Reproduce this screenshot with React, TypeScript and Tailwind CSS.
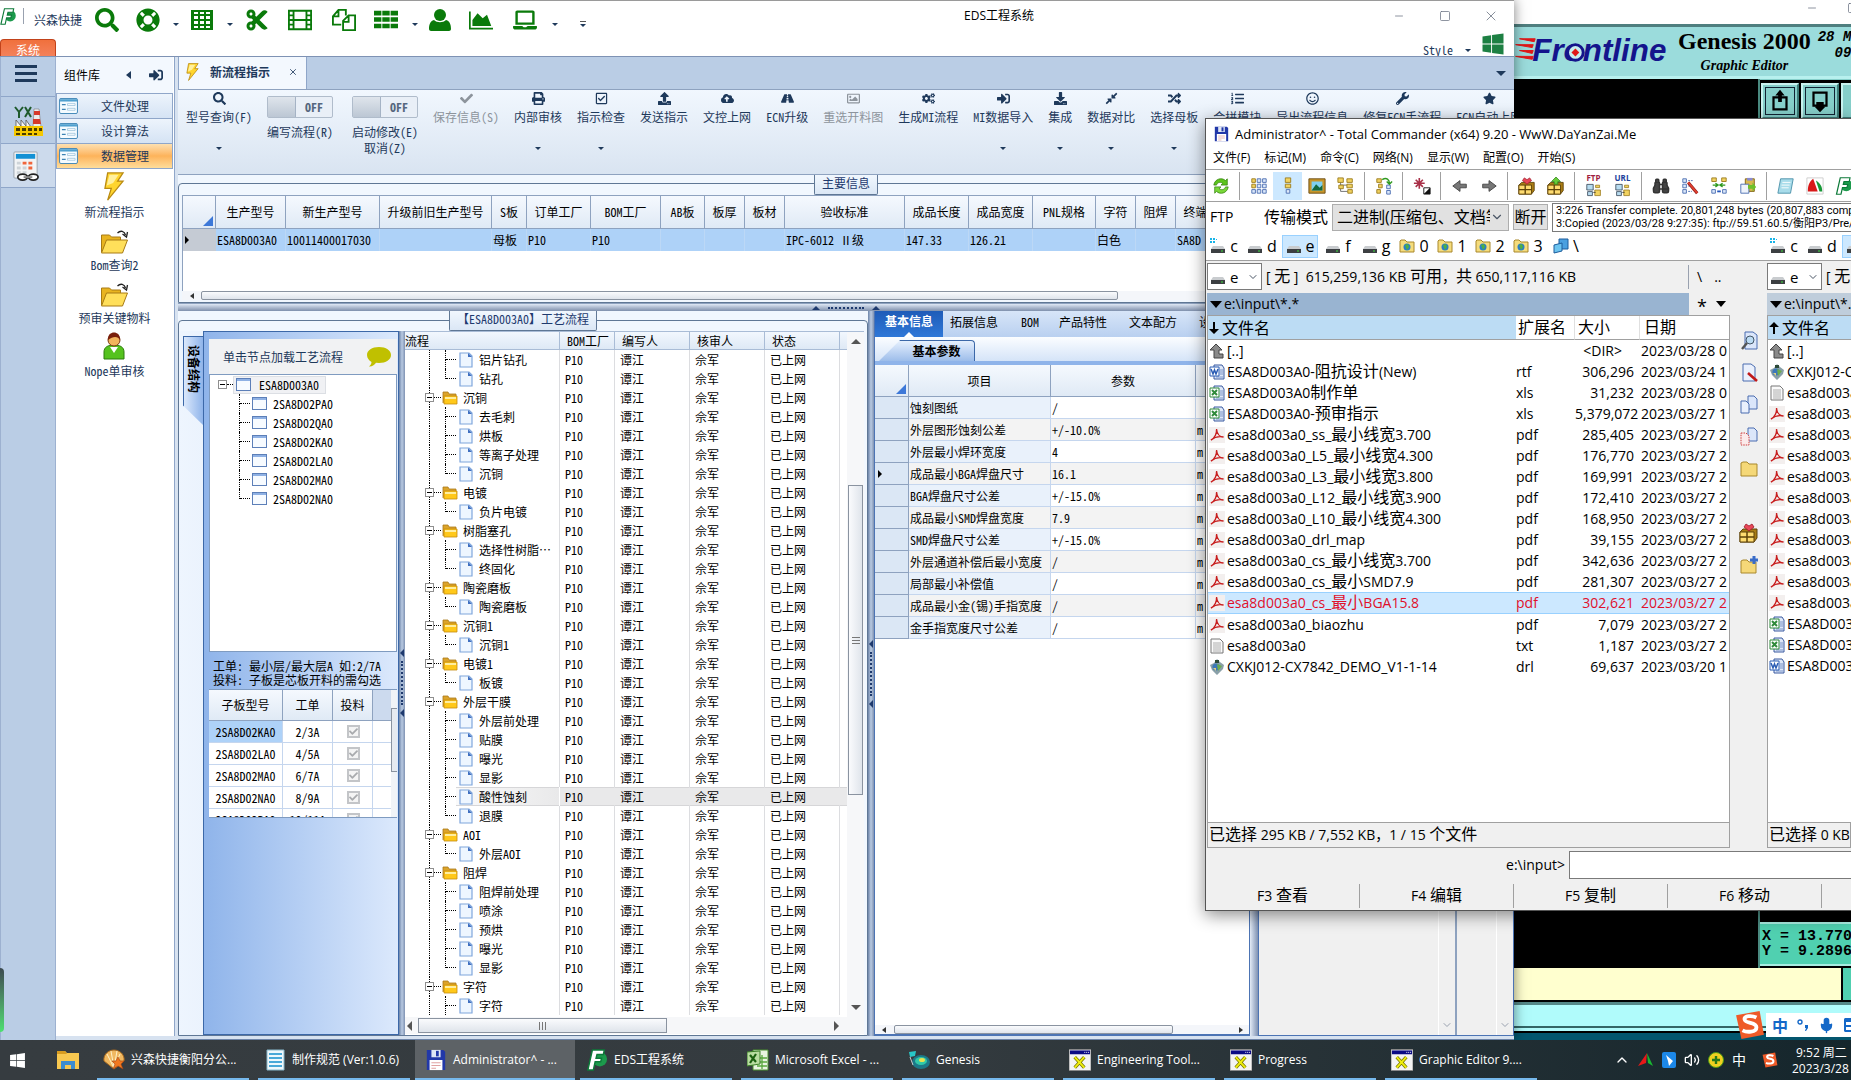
import { useState } from "react";
import type { ComponentType, ReactNode } from "react";
import {
  FaCheck,
  FaCloudUploadAlt,
  FaCogs,
  FaCompressAlt,
  FaCut,
  FaDownload,
  FaLaptop,
  FaLifeRing,
  FaListOl,
  FaPrint,
  FaRandom,
  FaRegCheckSquare,
  FaRegImage,
  FaRegSmile,
  FaRoad,
  FaSearch,
  FaSignInAlt,
  FaStar,
  FaTable,
  FaUpload,
  FaWindows,
  FaWrench,
} from "react-icons/fa";
import {
  Binoculars,
  ChevronDown,
  ChevronUp,
  Mic,
  Minus,
  Square,
  Volume2,
  X,
} from "lucide-react";

type Icon = ComponentType<{ className?: string }>;

/* ---------- title bar glyphs ---------- */

function GridGlyph({ className }: { className?: string }) {
  return (
    <svg viewBox="0 0 24 24" className={className} fill="currentColor" fillRule="evenodd">
      <path d="M1 2h22v20H1zM4 8v3h4V8zM10 8v3h4V8zM16 8v3h4V8zM4 13v3h4v-3zM10 13v3h4v-3zM16 13v3h4v-3zM4 18v2h4v-2zM10 18v2h4v-2zM16 18v2h4v-2zM4 4v2h4V4zM10 4v2h4V4zM16 4v2h4V4z" />
    </svg>
  );
}

function FilmGlyph({ className }: { className?: string }) {
  return (
    <svg viewBox="0 0 26 24" className={className} fill="currentColor" fillRule="evenodd">
      <path d="M0 1h26v22H0zM2 3v3h3V3zM2 8v3h3V8zM2 13v3h3v-3zM2 18v3h3v-3zM21 3v3h3V3zM21 8v3h3V8zM21 13v3h3v-3zM21 18v3h3v-3zM7 3v8h12V3zM7 13v8h12v-8z" />
    </svg>
  );
}

function CopyGlyph({ className }: { className?: string }) {
  return (
    <svg viewBox="0 0 26 24" className={className} fill="none" stroke="currentColor" strokeWidth="2">
      <path d="M10 17H1V8l6-7h8v6M7 1v7H1M12 23V13l6-6h7v16zM18 7v7h-6" />
    </svg>
  );
}

function RowsGlyph({ className }: { className?: string }) {
  return (
    <svg viewBox="0 0 26 24" className={className} fill="currentColor">
      <path d="M0 2h8v5H0zM9 2h8v5H9zM18 2h8v5h-8zM0 9h8v5H0zM9 9h8v5H9zM18 9h8v5h-8zM0 16h8v5H0zM9 16h8v5H9zM18 16h8v5h-8z" />
    </svg>
  );
}

function UserGlyph({ className }: { className?: string }) {
  return (
    <svg viewBox="0 0 22 24" className={className} fill="currentColor">
      <circle cx="11" cy="7" r="6" />
      <path d="M5 12c3 3 9 3 12 0 4 1 5 5 5 9 0 1-1 2-2 2H2c-1 0-2-1-2-2 0-4 1-8 5-9z" />
    </svg>
  );
}

function AreaGlyph({ className }: { className?: string }) {
  return (
    <svg viewBox="0 0 28 24" className={className} fill="currentColor">
      <path d="M0 2h2v19h26v2H0zM4 19v-7l6-8 6 6 5-4 5 13z" />
    </svg>
  );
}

/* ---------- data ---------- */

const QUICK_TOOLS: { name: string; icon: Icon; caret?: boolean; cls: string }[] = [
  { name: "查询", icon: FaSearch, cls: "w-6 ml-[13px]" },
  { name: "帮助", icon: FaLifeRing, caret: true, cls: "w-6 ml-[17px]" },
  { name: "表格", icon: GridGlyph, caret: true, cls: "w-6 ml-[11px]" },
  { name: "剪切", icon: FaCut, cls: "w-6 ml-3" },
  { name: "影片", icon: FilmGlyph, cls: "w-[26px] ml-[18px]" },
  { name: "复制", icon: CopyGlyph, cls: "w-[26px] ml-[18px]" },
  { name: "列表", icon: RowsGlyph, caret: true, cls: "w-[26px] ml-4" },
  { name: "用户", icon: UserGlyph, cls: "w-[22px] ml-[11px]" },
  { name: "图表", icon: AreaGlyph, cls: "w-7 ml-4" },
  { name: "电脑", icon: FaLaptop, caret: true, cls: "w-7 ml-4" },
];

type RibbonItem = { label: string; icon?: Icon; caret?: boolean; disabled?: boolean; extra?: string };

const RIBBON: RibbonItem[] = [
  { label: "型号查询(F)", icon: FaSearch, caret: true },
  { label: "编写流程(R)" },
  { label: "启动修改(E)", extra: "取消(Z)" },
  { label: "保存信息(S)", icon: FaCheck, disabled: true },
  { label: "内部审核", icon: FaPrint, caret: true },
  { label: "指示检查", icon: FaRegCheckSquare, caret: true },
  { label: "发送指示", icon: FaUpload },
  { label: "文控上网", icon: FaCloudUploadAlt },
  { label: "ECN升级", icon: FaRoad },
  { label: "重选开料图", icon: FaRegImage, disabled: true },
  { label: "生成MI流程", icon: FaCogs },
  { label: "MI数据导入", icon: FaSignInAlt, caret: true },
  { label: "集成", icon: FaDownload, caret: true },
  { label: "数据对比", icon: FaCompressAlt, caret: true },
  { label: "选择母板", icon: FaRandom, caret: true },
  { label: "合拼模块", icon: FaListOl },
  { label: "导出流程信息", icon: FaRegSmile },
  { label: "修复ECN手流程", icon: FaWrench },
  { label: "ECN自动上网", icon: FaStar },
];

const MAIN_COLS = [
  { title: "生产型号", value: "ESA8D003A0", w: "w-[70px]" },
  { title: "新生产型号", value: "10011400017030", w: "w-[94px]" },
  { title: "升级前旧生产型号", value: "", w: "w-[112px]" },
  { title: "S板", value: "母板", w: "w-[35px]" },
  { title: "订单工厂", value: "P10", w: "w-[64px]" },
  { title: "BOM工厂", value: "P10", w: "w-[70px]" },
  { title: "AB板", value: "", w: "w-[44px]" },
  { title: "板厚", value: "", w: "w-10" },
  { title: "板材", value: "", w: "w-10" },
  { title: "验收标准", value: "IPC-6012 Ⅱ级", w: "w-[120px]" },
  { title: "成品长度", value: "147.33", w: "w-16" },
  { title: "成品宽度", value: "126.21", w: "w-16" },
  { title: "PNL规格", value: "", w: "w-[63px]" },
  { title: "字符", value: "白色", w: "w-10" },
  { title: "阻焊", value: "", w: "w-10" },
  { title: "终端", value: "SA8D", w: "w-10" },
];

const BOARDS = ["2SA8D02PA0", "2SA8D02QA0", "2SA8D02KA0", "2SA8D02LA0", "2SA8D02MA0", "2SA8D02NA0"];

const ORDERS = [
  ["2SA8D02KA0", "2/3A"],
  ["2SA8D02LA0", "4/5A"],
  ["2SA8D02MA0", "6/7A"],
  ["2SA8D02NA0", "8/9A"],
  ["2SA8D02PA0", "10/11A"],
];

const FLOW: { name?: string; steps: string[]; open?: boolean }[] = [
  { steps: ["铝片钻孔", "钻孔"] },
  { name: "沉铜", steps: ["去毛刺", "烘板", "等离子处理", "沉铜"] },
  { name: "电镀", steps: ["负片电镀"] },
  { name: "树脂塞孔", steps: ["选择性树脂…", "终固化"] },
  { name: "陶瓷磨板", steps: ["陶瓷磨板"] },
  { name: "沉铜1", steps: ["沉铜1"] },
  { name: "电镀1", steps: ["板镀"] },
  { name: "外层干膜", steps: ["外层前处理", "贴膜", "曝光", "显影", "酸性蚀刻", "退膜"] },
  { name: "AOI", steps: ["外层AOI"] },
  { name: "阻焊", steps: ["阻焊前处理", "喷涂", "预烘", "曝光", "显影"] },
  { name: "字符", steps: ["字符"], open: true },
];

const PARAMS = [
  ["蚀刻图纸", "/", ""],
  ["外层图形蚀刻公差", "+/-10.0%", "mil"],
  ["外层最小焊环宽度", "4", "mil"],
  ["成品最小BGA焊盘尺寸", "16.1", "mil"],
  ["BGA焊盘尺寸公差", "+/-15.0%", "mil"],
  ["成品最小SMD焊盘宽度", "7.9", "mil"],
  ["SMD焊盘尺寸公差", "+/-15.0%", "mil"],
  ["外层通道补偿后最小宽度", "/", "mil"],
  ["局部最小补偿值", "/", "mil"],
  ["成品最小金(锡)手指宽度", "/", "mil"],
  ["金手指宽度尺寸公差", "/", "mil"],
];

const FILES = [
  ["up", "[..]", "", "<DIR>", "2023/03/28 0"],
  ["doc", "ESA8D003A0-阻抗设计(New)", "rtf", "306,296", "2023/03/24 1"],
  ["xls", "ESA8D003A0制作单", "xls", "31,232", "2023/03/28 0"],
  ["xls", "ESA8D003A0-预审指示", "xls", "5,379,072", "2023/03/27 1"],
  ["pdf", "esa8d003a0_ss_最小线宽3.700", "pdf", "285,405", "2023/03/27 2"],
  ["pdf", "esa8d003a0_L5_最小线宽4.300", "pdf", "176,770", "2023/03/27 2"],
  ["pdf", "esa8d003a0_L3_最小线宽3.800", "pdf", "169,991", "2023/03/27 2"],
  ["pdf", "esa8d003a0_L12_最小线宽3.900", "pdf", "172,410", "2023/03/27 2"],
  ["pdf", "esa8d003a0_L10_最小线宽4.300", "pdf", "168,950", "2023/03/27 2"],
  ["pdf", "esa8d003a0_drl_map", "pdf", "39,155", "2023/03/27 2"],
  ["pdf", "esa8d003a0_cs_最小线宽3.700", "pdf", "342,636", "2023/03/27 2"],
  ["pdf", "esa8d003a0_cs_最小SMD7.9", "pdf", "281,307", "2023/03/27 2"],
  ["pdf", "esa8d003a0_cs_最小BGA15.8", "pdf", "302,621", "2023/03/27 2"],
  ["pdf", "esa8d003a0_biaozhu", "pdf", "7,079", "2023/03/27 2"],
  ["txt", "esa8d003a0", "txt", "1,187", "2023/03/27 2"],
  ["drl", "CXKJ012-CX7842_DEMO_V1-1-14", "drl", "69,637", "2023/03/20 1"],
];

const RIGHT_FILES = [
  ["up", "[..]"],
  ["drl", "CXKJ012-CX7842"],
  ["txt", "esa8d003a0"],
  ...Array.from({ length: 10 }, () => ["pdf", "esa8d003a0_cs"]),
  ["xls", "ESA8D003A0"],
  ["xls", "ESA8D003A0"],
  ["doc", "ESA8D003A0"],
];

/* ---------- small drawings ---------- */

function Bolt({ className }: { className?: string }) {
  return (
    <svg viewBox="0 0 24 32" className={className}>
      <path d="M5 1h17l-6 9h6L5 31l4-13H2z" fill="#ffd52e" stroke="#b98a12" strokeWidth="1.4" />
      <path d="M7 3h10l-6 9-7 3z" fill="#fff0a0" />
    </svg>
  );
}

function FolderArrow({ className }: { className?: string }) {
  return (
    <svg viewBox="0 0 28 24" className={className}>
      <path d="M1 22V5h8l2 2h9v4" fill="#e8b420" stroke="#a87b14" />
      <path d="M1 23l5-13h21l-5 13z" fill="#ffdf5a" stroke="#a87b14" />
      <path d="M17 3c3-3 7-2 8 2M22 4l4 3 1-5" fill="none" stroke="#222" strokeWidth="1.3" />
    </svg>
  );
}

function Person({ className }: { className?: string }) {
  return (
    <svg viewBox="0 0 22 28" className={className}>
      <path d="M1 27v-7c0-5 4-7 10-7s10 2 10 7v7z" fill="#55c21e" stroke="#2d7c0c" />
      <path d="M7 15l4 6 4-6z" fill="#fff" />
      <circle cx="11" cy="8" r="6" fill="#f2b45c" stroke="#7a3a12" />
      <path d="M5 8c-1-10 13-10 12 0-2-4-7-4-12 0z" fill="#7a1f0c" />
    </svg>
  );
}

function FormIcon({ className }: { className?: string }) {
  return (
    <svg viewBox="0 0 20 17" className={className}>
      <rect x="0.5" y="0.5" width="19" height="16" rx="1.5" fill="#f4fbff" stroke="#3c83b4" />
      <path d="M1 2.5h18" stroke="#4fa0cf" strokeWidth="2.5" />
      <path d="M3 7h4M3 12h4" stroke="#3c83b4" strokeWidth="1.4" />
      <path d="M9 6h8v2H9zM9 11h8v2H9z" fill="#fff" stroke="#8bb9d6" strokeWidth="0.7" />
    </svg>
  );
}

function Factory({ className }: { className?: string }) {
  return (
    <svg viewBox="0 0 31 31" className={className}>
      <path d="M2 2l4 5v6M10 2L6 7M12 2l6 10M18 2l-6 10" stroke="#1f5a2c" strokeWidth="2" fill="none" />
      <path d="M21 4h5l2 18h-8z" fill="#eee" stroke="#777" strokeWidth="0.6" />
      <path d="M21 6h6v4h-6zM20 14h7l1 5h-8z" fill="#d63a2c" />
      <path d="M3 22v-7l5 6v-6l5 6v-6l5 7z" fill="#f3f3f3" stroke="#555" strokeWidth="0.8" />
      <path d="M1 21h29v10H1z" fill="#f5c800" />
      <path d="M3 23h4v3H3zM9 23h4v3H9zM15 23h4v3h-4zM21 23h3v3h-3zM26 23h3v3h-3zM3 28h4v2H3zM9 28h4v2H9zM15 28h4v2h-4zM21 28h3v2h-3z" fill="#4a3c00" />
    </svg>
  );
}

function Calc({ className }: { className?: string }) {
  return (
    <svg viewBox="0 0 30 31" className={className}>
      <rect x="2" y="1" width="24" height="27" rx="1" fill="#f2f4f6" stroke="#9aa4ad" />
      <path d="M4 3h20v5H4z" fill="#1491d4" />
      <path d="M5 11h4v3H5zM5 16h4v3H5zM5 21h4v3H5zM11 16h4v3h-4zM11 21h4v3h-4z" fill="#cdd3d8" />
      <path d="M11 11h4v3h-4zM17 11h4v3h-4zM17 16h4v3h-4z" fill="#f0663c" />
      <ellipse cx="11" cy="27" rx="5" ry="3" fill="#fff" stroke="#222" strokeWidth="1.8" />
      <ellipse cx="22" cy="27" rx="5" ry="3" fill="#fff" stroke="#222" strokeWidth="1.8" />
      <path d="M12 27h9" stroke="#888" strokeWidth="2" />
    </svg>
  );
}

function FLogo({ className }: { className?: string }) {
  return (
    <svg viewBox="0 0 22 24" className={className}>
      <circle cx="14" cy="11" r="8" fill="#1c9a4c" />
      <path d="M6 1h13l-1 5H11l-1 4h6l-1 4H9l-2 9H1z" fill="#fff" stroke="#0c7a38" strokeWidth="1.6" />
    </svg>
  );
}

function YellowFolder({ className }: { className?: string }) {
  return (
    <svg viewBox="0 0 16 14" className={className}>
      <path d="M1 12V1h5l1 2h7v2" fill="#dca42a" stroke="#a9781a" strokeWidth="0.8" />
      <path d="M2 13V5h13v8z" fill="#ffc81a" stroke="#c48a10" strokeWidth="0.8" />
      <path d="M3 6h11v2H3z" fill="#ffeea0" />
    </svg>
  );
}

function Page({ className }: { className?: string }) {
  return (
    <svg viewBox="0 0 14 16" className={className}>
      <path d="M1 1h9l3 3v11H1z" fill="#eef6ff" stroke="#7fa6dc" strokeWidth="1.2" />
      <path d="M9 1v4h4z" fill="#3f6fc0" />
    </svg>
  );
}

function WindowIcon({ className }: { className?: string }) {
  return (
    <svg viewBox="0 0 15 13" className={className}>
      <rect x="0.5" y="0.5" width="14" height="12" fill="#f7fbff" stroke="#5c7fb8" />
      <path d="M1 2h13" stroke="#8fb1e4" strokeWidth="2" />
    </svg>
  );
}

function Disk({ className }: { className?: string }) {
  return (
    <svg viewBox="0 0 22 24" className={className}>
      <path d="M1 1h18l2 2v20H1z" fill="#2238a8" />
      <path d="M6 1h10v8H6z" fill="#dfe6f5" />
      <path d="M11 2h3v6h-3z" fill="#2238a8" />
      <path d="M4 12h14v11H4z" fill="#fff" />
      <path d="M6 15h10M6 18h10M6 21h5" stroke="#d99" />
    </svg>
  );
}

function XWin({ className }: { className?: string }) {
  return (
    <svg viewBox="0 0 23 22" className={className}>
      <path d="M0 0h23v22H0z" fill="#f4f4f4" stroke="#888" />
      <path d="M1 1h21v4H1z" fill="#0a0a84" />
      <path d="M16 3h1M18 3h1M20 3h1" stroke="#fff" />
      <path d="M6 8l10 11M16 8L6 19" stroke="#777700" strokeWidth="3.6" />
      <path d="M6 8l10 11M16 8L6 19" stroke="#f0ee10" strokeWidth="2" />
    </svg>
  );
}

function Drive({ className, win }: { className?: string; win?: boolean }) {
  return (
    <svg viewBox="0 0 16 16" className={className}>
      {win && <path d="M0 0h2v2H0zM3 0h2v2H3zM0 3h2v2H0zM3 3h2v2H3zM6 1h1v1H6z" fill="#18b4e8" />}
      <path d="M3 8h10l2 3H1z" fill="#c9cccf" />
      <path d="M1 11h14v4H1z" fill="#3c3f42" />
      <path d="M11 13h2" stroke="#3de03d" strokeWidth="1.2" />
    </svg>
  );
}

function GlobeFolder() {
  return (
    <svg viewBox="0 0 16 16" className="size-4 shrink-0">
      <path d="M1 14V3l1-1h4l2 2h7v10z" fill="#f5dc7c" stroke="#a9882c" />
      <circle cx="8" cy="9" r="3.5" fill="#2b7fc4" />
      <path d="M6 7l3-1 1 3-2 3z" fill="#50b040" />
    </svg>
  );
}

function FileIcon({ kind }: { kind: string }) {
  const office = (color: string, mark: ReactNode) => (
    <>
      <path d="M5 1h8l2 3v11H5z" fill="#dfe8f8" stroke="#3a5aa0" />
      <path d="M11 6h3M11 8h3M11 10h3M7 13h7" stroke="#7a94c8" />
      <path d="M1 3h9v9H1z" fill="#fff" stroke={color} />
      {mark}
    </>
  );
  return (
    <svg viewBox="0 0 16 16" className="size-4 shrink-0">
      {kind === "up" && <path d="M7 1l6 6h-3v4h4v4H5V7H1z" fill="#8a8a8a" stroke="#444" />}
      {kind === "doc" && office("#2a5cb4", <path d="M2 5l2 5 1.5-4L7 10l2-5" fill="none" stroke="#2a5cb4" strokeWidth="1.5" />)}
      {kind === "xls" && office("#2f8a3a", <path d="M3 5l5 5M8 5l-5 5" stroke="#2f8a3a" strokeWidth="2" />)}
      {kind === "pdf" && (
        <>
          <path d="M0 0h16v16H0z" fill="#f3efee" />
          <path d="M2 13c4-2 6-7 5.500-11C8 7 11 10 14.500 10 10 9 5 10.500 2 13z" fill="none" stroke="#c81e1e" strokeWidth="1.400" />
        </>
      )}
      {kind === "txt" && (
        <>
          <path d="M2 1h9l3 3v11H2z" fill="#fafafa" stroke="#777" />
          <path d="M4 5h8M4 7h8M4 9h8M4 11h8M4 13h8" stroke="#999" strokeWidth="0.8" />
        </>
      )}
      {kind === "drl" && (
        <>
          <path d="M8 0l3 3 4 3-1 4-6 6-5-5-2-5 4-2z" fill="#8aa0a8" />
          <circle cx="7" cy="8" r="3.6" fill="#3d78b8" />
          <path d="M8 5l5 2-4 5z" fill="#6cae4c" />
          <path d="M6 1h4v3H6z" fill="#2c4a38" />
          <path d="M4 9h3v3z" fill="#e0d080" />
        </>
      )}
    </svg>
  );
}

/* icons of the file manager's bars, all on a 20px grid */
const BOX = (
  <>
    <path d="M1 9l3-3h14v9l-3 4H1z" fill="#a87c14" stroke="#5e4208" />
    <path d="M1 9h14v10H1z" fill="#ffdc70" stroke="#5e4208" />
    <path d="M8 9v10M1 14h14" stroke="#5e4208" strokeWidth="1.5" />
  </>
);

const BAR_DRAWINGS: Record<string, ReactNode> = {
  refresh: (
    <>
      <path d="M2 9c1-7 9-9 13-5l2-2v7h-7l2-2c-3-2-6-1-7 2z" fill="#5cc41c" stroke="#2f7d0a" strokeWidth="0.8" />
      <path d="M18 11c-1 7-9 9-13 5l-2 2v-7h7l-2 2c3 2 6 1 7-2z" fill="#7ad83a" stroke="#2f7d0a" strokeWidth="0.8" />
    </>
  ),
  brief: (
    <>
      <path d="M2 2h4v4H2zM2 8h4v4H2z" fill="#f1d260" stroke="#9b7a1c" />
      <path d="M8 2h4v4H8zM14 2h4v4h-4zM8 8h4v4H8zM14 8h4v4h-4zM2 14h4v4H2zM8 14h4v4H8zM14 14h4v4h-4z" fill="#dce8fa" stroke="#4a6cb0" />
    </>
  ),
  full: (
    <>
      <path d="M7 1h6v5H7zM7 8h6v4H7z" fill="#f1d260" stroke="#9b7a1c" />
      <path d="M8 14h4v4H8z" fill="#dce8fa" stroke="#4a6cb0" />
    </>
  ),
  thumbs: (
    <>
      <path d="M1 2h18v16H1z" fill="#c8962a" stroke="#6a4a10" />
      <path d="M4 5h12v10H4z" fill="#7fd0f0" />
      <path d="M4 15l5-7 4 4 3-3v6z" fill="#14683c" />
    </>
  ),
  tree: (
    <>
      <path d="M4 5v11h8M4 9h8" fill="none" stroke="#666" />
      <path d="M1 1h6v5H1zM11 2h6v4h-6zM11 8h6v4h-6zM2 9h5v4H2z" fill="#f1d260" stroke="#9b7a1c" />
      <path d="M12 14h5v4h-5z" fill="#f1d260" stroke="#9b7a1c" />
    </>
  ),
  branch: (
    <>
      <path d="M2 2h5v4H2zM4 8h4v4H4zM2 14h4v4H2z" fill="#f1d260" stroke="#9b7a1c" />
      <path d="M13 9h4v4h-4zM13 15h4v4h-4z" fill="#dce8fa" stroke="#4a6cb0" />
      <path d="M8 3c5-3 8 0 8 4M13 5l3 3 3-3" fill="none" stroke="#2f9a20" strokeWidth="1.6" />
    </>
  ),
  star: (
    <>
      <path d="M7 1v12M1 7h12M3 3l8 8M11 3l-8 8" stroke="#a83048" strokeWidth="1.8" />
      <path d="M12 12h7v7h-7z" fill="#fff" stroke="#111" />
      <path d="M12 19l7-7v7z" fill="#111" />
    </>
  ),
  back: <path d="M2 10l8-6v4h7v4h-7v4z" fill="#777" stroke="#444" />,
  next: <path d="M18 10l-8-6v4H3v4h7v4z" fill="#777" stroke="#444" />,
  pack: (
    <>
      {BOX}
      <path d="M10 8L5 4l2-3 3 2 3-2 2 3z" fill="#e84858" stroke="#a01828" strokeWidth="0.8" />
    </>
  ),
  unpack: (
    <>
      {BOX}
      <path d="M10 0l5 5h-3v3H8V5H5z" fill="#68cc38" stroke="#2a8018" strokeWidth="0.8" />
    </>
  ),
  net: (
    <>
      <path d="M1 3h8v7H1zM2 12h6v5H2z" fill="#b8dcf0" stroke="#345" />
      <path d="M12 4h5v3h-5zM11 10h7v7h-7z" fill="#f1d260" stroke="#9b7a1c" />
      <path d="M9 13h3" stroke="#333" />
    </>
  ),
  rename: (
    <>
      <path d="M2 2h4v4H2zM2 8h4v4H2zM2 14h4v4H2z" fill="#dce8fa" stroke="#4a6cb0" />
      <path d="M8 4h5M8 10h3M8 16h4" stroke="#4a6cb0" strokeDasharray="2 1" />
      <path d="M8 6l10 12" stroke="#8a1818" strokeWidth="3.4" />
      <path d="M8 6l10 12" stroke="#e04030" strokeWidth="2" />
    </>
  ),
  sync: (
    <>
      <path d="M2 1h5v4H2zM13 1h5v4h-5z" fill="#f1d260" stroke="#9b7a1c" />
      <path d="M2 14h4v4H2zM14 14h4v4h-4z" fill="#dce8fa" stroke="#4a6cb0" />
      <path d="M3 9h5M12 9h5M6 7l3 2-3 2M14 7l-3 2 3 2" stroke="#2f9a20" strokeWidth="1.5" fill="none" />
      <path d="M8 16h4" stroke="#2255bb" strokeWidth="2" />
    </>
  ),
  paste: (
    <>
      <path d="M7 2h10v14H7z" fill="#d8b850" stroke="#806010" />
      <path d="M9 1h6v3H9z" fill="#8a8ad0" />
      <path d="M2 8h9v10H2z" fill="#eef3fb" stroke="#4a6cb0" />
      <path d="M10 9h5V6l4 5-4 5v-3h-5z" fill="#6ec02c" />
    </>
  ),
  note: (
    <>
      <path d="M4 2h14l-3 16H1z" fill="#a8dcea" stroke="#4a90a8" />
      <path d="M6 6h9M5 9h9M5 12h8" stroke="#fff" />
    </>
  ),
  red: (
    <>
      <path d="M1 1h18v18H1z" fill="#fff" stroke="#ccc" />
      <path d="M8 2l5 14H2C2 9 4 5 8 2z" fill="#d81818" />
      <path d="M11 4c5 3 7 7 7 12h-3z" fill="#189838" />
    </>
  ),
  look: (
    <>
      <path d="M6 1h8l4 3v14H6z" fill="#dbe6fa" stroke="#4a6cb0" />
      <circle cx="11" cy="9" r="4" fill="#bcdcf4" stroke="#456" />
      <path d="M8 12l-5 6" stroke="#555" strokeWidth="2.4" />
    </>
  ),
  edit: (
    <>
      <path d="M4 1h8l4 3v14H4z" fill="#eaf0fc" stroke="#4a6cb0" />
      <path d="M9 10l9 8" stroke="#c01818" strokeWidth="2.6" />
    </>
  ),
  copy: (
    <>
      <path d="M9 1h6l3 3v10H9z" fill="#dbe6fa" stroke="#4a6cb0" />
      <path d="M2 6h5l3 3v9H2z" fill="#eaf0fc" stroke="#4a6cb0" />
    </>
  ),
  move: (
    <>
      <path d="M9 1h6l3 3v10H9z" fill="#dbe6fa" stroke="#4a6cb0" />
      <path d="M2 6h5l3 3v9H2z" fill="#fbeaea" stroke="#d04040" strokeDasharray="1.5 1" />
    </>
  ),
  folder: <path d="M2 17V4l2-1h4l2 2h8v12z" fill="#f5d878" stroke="#a9882c" />,
  newfolder: (
    <>
      <path d="M2 18V6l2-1h4l2 2h7v11z" fill="#f5d878" stroke="#a9882c" />
      <path d="M11 5h8M15 1v8" stroke="#3a6cc8" strokeWidth="3" />
    </>
  ),
};

function BarIcon({ name, className = "size-5" }: { name: string; className?: string }) {
  return (
    <svg viewBox="0 0 20 20" className={className}>
      {BAR_DRAWINGS[name]}
    </svg>
  );
}

const Caret = ({ className = "" }: { className?: string }) => (
  <span className={`inline-block border-x-3 border-t-3 border-x-transparent border-t-[#1e395b] ${className}`} />
);

/* Chinese runs stand one step larger than the latin ones in the file manager */
function Mixed({ text }: { text: string }) {
  return (
    <>
      {text.split(/([\u4e00-\u9fff]+)/).map((part, i) =>
        i % 2 ? (
          <span key={i} className="text-base leading-none">
            {part}
          </span>
        ) : (
          part
        )
      )}
    </>
  );
}

/* ---------- EDS window ---------- */

function TitleBar() {
  return (
    <header className="h-14 shrink-0 bg-white border-t border-[#9a9a9a] flex flex-col">
      <div className="h-[30px] flex items-center">
        <FLogo className="w-4 h-[17px]" />
        <span className="w-px h-4 bg-gray-400 ml-[7px]" />
        <span className="ml-[10px] text-xs leading-4 text-[#1e395b] pt-2">兴森快捷</span>
        <div className="flex items-center h-full pt-2">
          {QUICK_TOOLS.map(({ name, icon: Glyph, caret, cls }) => (
            <div key={name} className="flex items-center">
              <button aria-label={name} className={`text-[#0a7a0a] flex justify-center ${cls}`}>
                <Glyph className="size-6" />
              </button>
              {caret && <Caret className="ml-[13px] mt-2" />}
            </div>
          ))}
          <span className="ml-[22px] mt-2 flex flex-col items-center gap-0.5">
            <span className="w-1.5 h-px bg-[#555]" />
            <Caret />
          </span>
        </div>
        <h1 className="flex-1 pl-9 text-center text-xs leading-4 font-[Open_Sans,Noto_Sans_CJK_SC,sans-serif]">EDS工程系统</h1>
        <button aria-label="最小化" className="w-[46px] flex justify-center text-gray-500">
          <Minus className="size-3" strokeWidth={1.5} />
        </button>
        <button aria-label="最大化" className="w-[46px] flex justify-center text-gray-500">
          <Square className="size-3" strokeWidth={1.5} />
        </button>
        <button aria-label="关闭" className="w-[46px] flex justify-center text-gray-500">
          <X className="size-4" strokeWidth={1.2} />
        </button>
      </div>
      <div className="flex-1 flex items-end justify-between">
        <button className="w-14 h-[17px] rounded-t-sm border border-b-0 border-[#c2421a] bg-gradient-to-b from-[#f0703c] to-[#f4815a] text-white text-xs leading-[20px] overflow-hidden">
          系统
        </button>
        <div className="flex items-end pr-[9px] gap-2.5">
          <button className="flex items-center gap-3 text-xs leading-3 text-[#1e395b]">
            Style <Caret />
          </button>
          <FaWindows className="size-6 text-[#1d8043]" />
        </div>
      </div>
    </header>
  );
}

function Strip() {
  return (
    <aside className="w-14 shrink-0 bg-[#bacde5] border-x border-[#9db1d0] flex flex-col items-center">
      <button aria-label="菜单" className="h-[39px] w-full pb-1.5 pr-1 flex flex-col justify-center items-center gap-1">
        <span className="w-[22px] h-[3px] bg-[#1e395b]" />
        <span className="w-[22px] h-[3px] bg-[#1e395b]" />
        <span className="w-[22px] h-[3px] bg-[#1e395b]" />
      </button>
      <button aria-label="工厂" className="h-12 w-full border-y border-[#8fa6c9] flex items-center justify-center">
        <Factory className="w-[31px] h-[31px]" />
      </button>
      <button aria-label="计算" className="h-11 w-full pr-1 bg-[#ccdaec] border-b border-[#8fa6c9] flex items-center justify-center">
        <Calc className="w-[29px] h-8" />
      </button>
    </aside>
  );
}

function ComponentPanel() {
  const groups = ["文件处理", "设计算法", "数据管理"];
  const items: [string, Icon, string][] = [
    ["新流程指示", Bolt, "w-6 h-[30px]"],
    ["Bom查询2", FolderArrow, "w-[29px] h-6"],
    ["预审关键物料", FolderArrow, "w-[29px] h-6"],
    ["Nope单审核", Person, "w-[22px] h-[28px]"],
  ];
  return (
    <aside className="w-[119px] shrink-0 bg-white border-r border-[#8fa6c9] text-xs leading-4 text-[#1e395b] flex flex-col pr-px mb-1">
      <div className="h-[37px] px-2 flex items-center bg-[#f3f8fe] border-b border-[#8fa6c9]">
        <span className="text-black">组件库</span>
        <button aria-label="折叠" className="ml-auto border-y-4 border-r-5 border-y-transparent border-r-[#1e395b]" />
        <button aria-label="固定" className="ml-[18px] mr-0.5">
          <FaSignInAlt className="size-[14px]" />
        </button>
      </div>
      {groups.map((g) => (
        <button
          key={g}
          className={`h-[25px] shrink-0 border border-t-0 border-[#8fa6c9] flex items-center pl-0.5 ${
            g === "数据管理"
              ? "bg-gradient-to-b from-[#fde0b0] via-[#fdb35a] to-[#fedd9a]"
              : "bg-gradient-to-b from-[#edf4fc] to-[#d5e3f4]"
          }`}
        >
          <FormIcon className="w-[19px] h-4" />
          <span className="flex-1 text-center">{g}</span>
        </button>
      ))}
      <div className="pt-[3px] flex flex-col items-center">
        {items.map(([name, Glyph, cls]) => (
          <button key={name} className="h-[53px] flex flex-col items-center justify-end pb-1">
            <Glyph className={cls} />
            <span className="mt-0.5 leading-[18px]">{name}</span>
          </button>
        ))}
      </div>
    </aside>
  );
}

function Switch({ label }: { label: string }) {
  const [on, setOn] = useState(false);
  return (
    <button
      role="switch"
      aria-checked={on}
      aria-label={label}
      onClick={() => setOn(!on)}
      className="mt-1 w-[66px] h-[22px] shrink-0 flex border border-[#b0bccb] rounded-xs bg-[#e9eff7]"
    >
      <span className="w-7 h-full bg-gradient-to-b from-[#dfe5ec] to-[#bcc7d4] border-r border-[#a5b3c5]" />
      <span className="flex-1 leading-5 font-bold text-[#56677e]">{on ? "ON" : "OFF"}</span>
    </button>
  );
}

function Ribbon() {
  return (
    <div className="h-[86px] shrink-0 pl-2 flex gap-[15px] overflow-hidden border-y border-[#8ea2bf] bg-gradient-to-b from-[#f1f7fe] to-[#d9e4f1] text-xs leading-4 text-[#1e395b]">
      {RIBBON.map(({ label, icon: Glyph, caret, disabled, extra }) =>
        Glyph ? (
          <button
            key={label}
            disabled={disabled}
            className={`shrink-0 pt-0.5 flex flex-col items-center whitespace-nowrap ${disabled ? "text-[#8d949c]" : ""}`}
          >
            <Glyph className="size-[13px]" />
            <span className="mt-1">{label}</span>
            {caret && <Caret className="mt-[22px]" />}
          </button>
        ) : (
          <div key={label} className={`shrink-0 pt-0.5 flex flex-col items-center whitespace-nowrap ${extra ? "ml-1" : ""}`}>
            <Switch label={label} />
            <span className="mt-1.5">{label}</span>
            {extra && <span>{extra}</span>}
          </div>
        )
      )}
    </div>
  );
}

function GroupTitle({ children }: { children: ReactNode }) {
  return (
    <span className="absolute top-0 left-1/2 -translate-x-1/2 h-5 px-[7px] border border-t-0 border-[#5f7795] rounded-b-xs bg-gradient-to-b from-[#f1f7fe] to-[#dbe7f5] text-xs leading-4 text-[#1f3a6e] whitespace-nowrap">
      {children}
    </span>
  );
}

function CornerMark({ className = "h-full" }: { className?: string }) {
  return (
    <div className={`flex items-end justify-end p-0.5 ${className}`}>
      <span className="border-l-10 border-b-10 border-l-transparent border-b-[#3d78d8]" />
    </div>
  );
}

function MainInfo() {
  return (
    <section className="relative h-[128px] shrink-0 pt-2 bg-[#f1f7fe]">
      <div className="h-full border border-[#5f7795] rounded-t-sm pt-[11px] pl-[3px] pb-0.5 flex flex-col">
        <div className="flex-1 min-h-0 overflow-hidden bg-white border-l border-t border-[#8ea2bf]">
          <table className="table-fixed border-separate border-spacing-0 w-[1033px] text-xs">
            <thead>
              <tr className="h-[33px] bg-gradient-to-b from-[#f5f9fe] to-[#dfe9f5]">
                <th aria-label="选择" className="w-[33px] p-0 border-r border-b border-[#8ea2bf]">
                  <CornerMark className="h-8" />
                </th>
                {MAIN_COLS.map((c) => (
                  <th key={c.title} className={`p-0 font-normal whitespace-nowrap border-r border-b border-[#8ea2bf] ${c.w}`}>
                    {c.title}
                  </th>
                ))}
              </tr>
            </thead>
            <tbody>
              <tr className="h-[22px] bg-[#aed2f8]">
                <td className="p-0 pl-0.5 bg-[#c5cbd4]">
                  <span className="block border-y-4 border-l-4 border-y-transparent border-l-black w-0" />
                </td>
                {MAIN_COLS.map((c) => (
                  <td key={c.title} className="p-0 pl-px whitespace-nowrap overflow-hidden border-r border-[#bcd8f6]">
                    {c.value}
                  </td>
                ))}
              </tr>
            </tbody>
          </table>
        </div>
        <div className="h-[9px] bg-[#f4f6fa] flex items-center">
          <span className="ml-2 border-y-3 border-r-4 border-y-transparent border-r-[#333]" />
          <span className="ml-[7px] w-[917px] h-[9px] border border-[#8a93a0] rounded-xs bg-gradient-to-b from-[#fafbfd] to-[#dfe4eb]" />
        </div>
      </div>
      <GroupTitle>主要信息</GroupTitle>
    </section>
  );
}

function BoardPane() {
  return (
    <div className="w-[220px] shrink-0 pl-1 flex bg-gradient-to-r from-[#eef5fe] to-[#d3e2f8]">
      <div className="w-5 shrink-0">
        <button className="mt-[5px] w-5 h-[89px] pt-2 flex justify-center items-start bg-gradient-to-r from-[#dbe8fb] to-[#8fb4ea] border-l border-t border-[#3c68a8] [clip-path:polygon(0_0,100%_0,100%_100%,0_78%)]">
          <span className="[writing-mode:vertical-rl] [text-orientation:sideways] text-xs leading-4 font-bold">设备结构</span>
        </button>
      </div>
      <div className="flex-1 min-w-0 pl-[5px] pr-px pt-[7px] border border-[#3c68a8] bg-gradient-to-r from-[#8fb4ea] to-[#dce9fc] flex flex-col text-xs leading-[14px]">
        <div className="h-[35px] shrink-0 pl-[14px] pr-1.5 bg-[#f1f2f3] flex items-center justify-between text-[#1e395b]">
          单击节点加载工艺流程
          <svg viewBox="0 0 24 20" className="w-6 h-5">
            <path d="M12 0c7 0 12 3.500 12 8s-5 8-12 8l-3-.2c-1 2-4 4-7 3.700 1.500-1 2.500-3 2.500-4.500C2 13.500 0 11 0 8c0-4.500 5-8 12-8z" fill="#c0c000" />
          </svg>
        </div>
        <div className="h-[278px] shrink-0 bg-white border border-[#7f9bc0] pl-2">
          <div className="h-[19px] flex items-center">
            <TreeBox />
            <span className="w-[6px] border-b border-dotted border-black" />
            <span className="h-[18px] px-0.5 pr-1.5 flex items-center gap-2 border border-[#dcdfe4] bg-[#f0f1f4]">
              <WindowIcon className="w-[15px] h-[13px]" />
              ESA8D003A0
            </span>
          </div>
          {BOARDS.map((b, i) => (
            <div key={b} className="h-[19px] flex items-center pl-[21px]">
              <span className="w-px h-full flex flex-col">
                <span className="h-1/2 border-l border-dotted border-black" />
                {i < BOARDS.length - 1 && <span className="h-1/2 border-l border-dotted border-black" />}
              </span>
              <span className="w-[10px] border-b border-dotted border-black" />
              <WindowIcon className="w-[15px] h-[13px] ml-[2px]" />
              <span className="ml-[6px]">{b}</span>
            </div>
          ))}
        </div>
        <p className="h-[37px] shrink-0 pt-[7px] pl-1 whitespace-nowrap">
          工单: 最小层/最大层A 如:2/7A
          <br />
          投料: 子板是芯板开料的需勾选
        </p>
        <div className="h-[129px] shrink-0 flex overflow-hidden bg-white border-y border-[#7f9bc0]">
          <div className="flex-1 min-w-0">
            <table className="table-fixed border-separate border-spacing-0 w-full">
              <thead>
                <tr className="h-[31px] bg-gradient-to-b from-[#f5f9fe] to-[#dfe9f5]">
                  <th className="w-[74px] p-0 font-normal border-r border-b border-[#8ea2bf]">子板型号</th>
                  <th className="w-[50px] p-0 font-normal border-r border-b border-[#8ea2bf]">工单</th>
                  <th className="w-10 p-0 font-normal border-r border-b border-[#8ea2bf]">投料</th>
                  <th aria-label="空列" className="p-0 border-b border-[#8ea2bf] bg-[#ccdaee]" />
                </tr>
              </thead>
              <tbody>
                {ORDERS.map(([id, layer], i) => (
                  <tr key={id} className="h-[22px] text-center">
                    <td className={`p-0 border-r border-b border-[#c5d6ee] ${i === 0 ? "bg-[#aed2f8]" : ""}`}>{id}</td>
                    <td className="p-0 border-r border-b border-[#c5d6ee]">{layer}</td>
                    <td className="p-0 border-r border-b border-[#c5d6ee]">
                      <span className="flex justify-center">
                        <input
                          type="checkbox"
                          defaultChecked
                          disabled
                          aria-label={`${id} 投料`}
                          className="appearance-none size-[13px] border-2 border-[#c3c5c8] bg-[#f4f4f4]"
                        />
                        <FaCheck className="-ml-[11px] mt-[2px] size-[9px] text-[#a9abae]" />
                      </span>
                    </td>
                    <td className="p-0 border-b border-[#c5d6ee]" />
                  </tr>
                ))}
              </tbody>
            </table>
          </div>
          <div className="w-[6px] bg-[#f0f3f7] pt-[18px]">
            <span className="block h-[64px] border border-r-0 border-[#8a93a0] bg-[#e6eaf0]" />
          </div>
        </div>
      </div>
    </div>
  );
}

function TreeBox() {
  return (
    <span className="size-[9px] shrink-0 border border-[#8f8f8f] bg-white flex items-center justify-center">
      <span className="w-[5px] h-px bg-black" />
    </span>
  );
}

function FlowRow({ name, kind, last }: { name: string; kind: "folder" | "step"; last?: boolean }) {
  const active = name === "酸性蚀刻";
  const cell = `p-0 border-r ${active ? "border-transparent bg-[#e9e9ea] border-y border-y-[#d6d6d8]" : "border-[#dcdde0]"}`;
  return (
    <tr className="h-[19px]">
      <td className={`p-0 border-r ${active ? "border-transparent" : "border-[#dcdde0]"}`}>
        {kind === "folder" ? (
          <div className="h-[19px] flex items-center pl-5">
            <span className="h-full w-[9px] flex flex-col items-center">
              <span className="flex-1 border-l border-dotted border-black" />
              <TreeBox />
              <span className="flex-1 border-l border-dotted border-black" />
            </span>
            <span className="w-[7px] mr-px border-b border-dotted border-black" />
            <YellowFolder className="w-4 h-[14px]" />
            <span className="ml-[5px]">{name}</span>
          </div>
        ) : (
          <div className="h-[19px] flex items-center">
            <span className="h-full w-[25px] shrink-0 border-r border-dotted border-black" />
            <span className="h-full w-4 shrink-0 flex flex-col">
              <span className="h-1/2 border-r border-dotted border-black" />
              {!last && <span className="h-1/2 border-r border-dotted border-black" />}
            </span>
            <span className="w-[10px] shrink-0 border-b border-dotted border-black" />
            <span className={`h-full flex-1 pl-[3px] flex items-center gap-1.5 whitespace-nowrap ${active ? "border-y border-[#d6d6d8] bg-gradient-to-r from-[#fafafa] to-[#e9e9ea]" : ""}`}>
              <Page className="w-[14px] h-4" />
              {name}
            </span>
          </div>
        )}
      </td>
      <td className={`${cell} pl-[5px]`}>P10</td>
      <td className={`${cell} pl-[5px]`}>谭江</td>
      <td className={`${cell} pl-[5px]`}>佘军</td>
      <td className={`${cell} pl-[5px]`}>已上网</td>
      <td className={active ? "bg-[#e9e9ea] border-y border-[#d6d6d8]" : ""} />
    </tr>
  );
}

function FlowPane() {
  return (
    <div className="flex-1 min-w-0 flex flex-col bg-white">
      <div className="flex-1 min-h-0 flex overflow-hidden">
        <div className="flex-1 min-w-0 overflow-hidden">
          <table className="table-fixed border-separate border-spacing-0 w-full text-xs leading-4">
            <thead>
              <tr className="h-[19px] text-left bg-gradient-to-b from-[#f3f8fe] to-[#dde8f5]">
                <th className="w-[155px] p-0 font-normal border-r border-y border-[#a9bcd6]">流程</th>
                <th className="w-[55px] p-0 pl-[7px] font-normal border-r border-y border-[#a9bcd6] whitespace-nowrap overflow-hidden">BOM工厂</th>
                <th className="w-[75px] p-0 pl-[7px] font-normal border-r border-y border-[#a9bcd6]">编写人</th>
                <th className="w-[75px] p-0 pl-[7px] font-normal border-r border-y border-[#a9bcd6]">核审人</th>
                <th className="w-[75px] p-0 pl-[7px] font-normal border-r border-y border-[#a9bcd6]">状态</th>
                <th aria-label="空列" className="p-0 border-y border-[#a9bcd6]" />
              </tr>
            </thead>
            <tbody>
              {FLOW.flatMap(({ name, steps, open }) => [
                ...(name ? [<FlowRow key={name} name={name} kind="folder" />] : []),
                ...steps.map((s, i) => (
                  <FlowRow key={`${name}-${s}`} name={s} kind="step" last={!open && i === steps.length - 1} />
                )),
              ])}
            </tbody>
          </table>
        </div>
        <div className="w-[17px] shrink-0 bg-[#f6f7f9] border-t border-[#a9bcd6] flex flex-col items-center py-[7px]">
          <span className="border-x-5 border-b-5 border-x-transparent border-b-[#555]" />
          <span className="mt-[141px] w-[15px] h-[310px] shrink-0 border border-[#8a93a0] bg-gradient-to-r from-[#fafbfd] to-[#dfe4eb] flex items-center justify-center">
            <span className="w-2 h-[7px] border-y border-[#777] flex items-center">
              <span className="w-full h-px bg-[#777]" />
            </span>
          </span>
          <span className="mt-auto border-x-5 border-t-5 border-x-transparent border-t-[#555]" />
        </div>
      </div>
      <div className="h-[17px] mb-px shrink-0 pr-[17px] bg-[#f6f7f9] flex items-center">
        <span className="ml-0.5 border-y-5 border-r-5 border-y-transparent border-r-[#555]" />
        <span className="ml-1.5 w-[249px] h-[15px] border border-[#8a93a0] bg-gradient-to-b from-[#fafbfd] to-[#dfe4eb] flex items-center justify-center">
          <span className="w-[7px] h-2 border-x border-[#777] flex justify-center">
            <span className="h-full w-px bg-[#777]" />
          </span>
        </span>
        <span className="ml-auto mr-2 border-y-5 border-l-5 border-y-transparent border-l-[#555]" />
      </div>
    </div>
  );
}

function VSplitter() {
  return (
    <div className="w-1.5 shrink-0 bg-gradient-to-r from-[#6d84a8] via-[#b9cae2] to-[#7f92b2] flex flex-col items-center justify-center gap-1">
      <span className="border-y-4 border-r-4 border-y-transparent border-r-[#1f3a6e]" />
      <span className="h-11 border-l-2 border-dotted border-[#1f3a6e]" />
      <span className="border-y-4 border-r-4 border-y-transparent border-r-[#1f3a6e]" />
    </div>
  );
}

function ParamPane() {
  const tabs = ["拓展信息", "BOM", "产品特性", "文本配方", "设"];
  return (
    <div className="w-[376px] shrink-0 flex flex-col bg-white border-x border-b-2 border-[#4c74b4] text-xs leading-4">
      <div role="tablist" className="h-[26px] shrink-0 flex bg-gradient-to-b from-[#d7e5f8] to-[#b9d0f0] overflow-hidden">
        <button role="tab" aria-selected className="relative w-[68px] shrink-0 pb-1.5 bg-gradient-to-b from-[#1f5cb8] to-[#2f78d8] text-white font-bold">
          基本信息
          <span className="absolute bottom-0 left-1/2 -translate-x-1/2 border-x-5 border-b-5 border-x-transparent border-b-white" />
        </button>
        {tabs.map((t) => (
          <button key={t} role="tab" className={`shrink-0 pb-1 ${t === "BOM" ? "pl-3 pr-[9px]" : "px-[11px]"} ${t === "拓展信息" ? "pl-[7px]" : ""}`}>
            {t}
          </button>
        ))}
      </div>
      <div className="h-6 shrink-0 pl-1 pt-[3px] bg-gradient-to-b from-[#fbfdff] to-[#d5e4f8]">
        <button className="h-full w-[96px] pl-5 rounded-tr-sm font-bold bg-gradient-to-b from-[#e6f0fd] to-[#9dbdea] border-r border-t border-[#3c68a8] [clip-path:polygon(22%_0,100%_0,100%_100%,0_100%)]">
          基本参数
        </button>
      </div>
      <div className="h-1 shrink-0 bg-[#8fb4ea]" />
      <div className="flex-1 min-h-0 overflow-hidden">
        <table className="table-fixed border-separate border-spacing-0 w-[380px]">
          <thead>
            <tr className="h-8 bg-gradient-to-b from-[#f5f9fe] to-[#dfe9f5]">
              <th aria-label="选择" className="w-[34px] p-0 border-r border-b border-[#8ea2bf]">
                <CornerMark className="h-[31px]" />
              </th>
              <th className="w-[142px] p-0 font-normal border-r border-b border-[#8ea2bf]">项目</th>
              <th className="w-[145px] p-0 font-normal border-r border-b border-[#8ea2bf]">参数</th>
              <th aria-label="单位" className="p-0 border-b border-[#8ea2bf]" />
            </tr>
          </thead>
          <tbody>
            {PARAMS.map(([name, value, unit], i) => (
              <tr key={name} className="h-[22px]">
                <td className="p-0 pl-[3px] bg-[#dbe7f5] border-r border-b border-[#8ea2bf]">
                  {i === 3 && <span className="block w-0 border-y-4 border-l-4 border-y-transparent border-l-black" />}
                </td>
                <td className={`p-0 pl-px border-r border-b border-[#c5d6ee] whitespace-nowrap ${i % 2 ? "bg-[#f3f3f3]" : "bg-[#e9f1fb]"}`}>{name}</td>
                <td className={`p-0 pl-px border-r border-b border-[#c5d6ee] ${i % 2 ? "bg-[#f3f3f3]" : ""}`}>{value}</td>
                <td className={`p-0 pl-px border-b border-[#c5d6ee] ${i % 2 ? "bg-[#f3f3f3]" : ""}`}>{unit}</td>
              </tr>
            ))}
          </tbody>
        </table>
      </div>
      <div className="h-[9px] shrink-0 bg-[#f4f6fa] flex items-center">
        <span className="ml-[7px] border-y-3 border-r-4 border-y-transparent border-r-[#333]" />
        <span className="ml-2 w-[279px] h-[9px] border border-[#8a93a0] rounded-xs bg-gradient-to-b from-[#fafbfd] to-[#dfe4eb]" />
        <span className="ml-auto mr-1.5 border-y-3 border-l-4 border-y-transparent border-l-[#333]" />
      </div>
    </div>
  );
}

function EdsWindow() {
  return (
    <section className="absolute left-0 top-0 bottom-0 w-[1514px] flex flex-col bg-[#d7e2f0] shadow-[0_0_12px_rgba(0,0,0,0.5)] font-[Noto_Sans_Mono_CJK_SC,Noto_Sans_CJK_SC,monospace] text-black">
      <TitleBar />
      <div className="flex-1 min-h-0 flex border-t border-[#7e92b4]">
        <Strip />
        <ComponentPanel />
        <div className="flex-1 min-w-0 ml-[3px] flex flex-col">
          <div className="h-8 shrink-0 bg-[#bacde5] flex items-center justify-between">
            <div className="h-full w-[129px] pl-1.5 pr-2 pb-0.5 bg-[#f3f8fe] border-x border-[#8fa6c9] flex items-center text-xs leading-4 text-[#1e395b]">
              <Bolt className="w-[15px] h-[18px]" />
              <span className="ml-2.5 font-bold">新流程指示</span>
              <button aria-label="关闭标签" className="ml-auto">
                <X className="size-[10px]" />
              </button>
            </div>
            <Caret className="mr-2 border-x-5 border-t-5" />
          </div>
          <Ribbon />
          <MainInfo />
          <div className="h-2 shrink-0 border-t border-[#8ea2bf] bg-gradient-to-b from-[#dfe8f5] to-[#7f90ac] flex items-center justify-center gap-2">
            <span className="border-x-4 border-b-4 border-x-transparent border-b-[#1f3a6e]" />
            <span className="w-9 border-t-2 border-dotted border-[#1f3a6e]" />
            <span className="border-x-4 border-b-4 border-x-transparent border-b-[#1f3a6e]" />
          </div>
          <div className="flex-1 min-h-0 flex pb-[3px] border-b border-[#6d84a8]">
            <section className="relative w-[690px] shrink-0 pt-[9px] bg-[#f1f7fe]">
              <div className="h-full border border-[#5f7795] rounded-t-sm pt-[10px] pr-[3px] flex">
                <BoardPane />
                <VSplitter />
                <FlowPane />
              </div>
              <GroupTitle>【ESA8D003A0】工艺流程</GroupTitle>
            </section>
            <VSplitter />
            <ParamPane />
            <div className="w-2 shrink-0 bg-gradient-to-r from-[#e3ebf6] to-[#7f92b2]" />
            <div className="flex-1 flex items-end bg-[#f0f0f0] border-x border-b border-[#4c74b4] text-gray-400">
              <div className="h-full flex-1 flex items-end justify-end border-r-2 border-[#8ea2bf]">
                <span className="h-full w-[17px] border-l border-white flex items-end justify-center pb-1">
                  <ChevronDown className="size-3" />
                </span>
              </div>
              <div className="h-full w-14 flex items-end justify-end">
                <span className="h-full w-[17px] border-l border-white flex items-end justify-center pb-1">
                  <ChevronDown className="size-3" />
                </span>
              </div>
            </div>
          </div>
        </div>
      </div>
    </section>
  );
}

/* ---------- Genesis window ---------- */

function GenesisWindow() {
  const btn = "w-[38px] h-9 shrink-0 border-2 border-t-[#c9f3f0] border-l-[#c9f3f0] border-b-[#3c7c78] border-r-[#3c7c78] bg-[#86cfca] p-0.5";
  return (
    <section className="absolute left-[1514px] right-0 top-0 bottom-0 bg-black flex flex-col overflow-hidden text-black">
      <div className="h-6 shrink-0 bg-white flex justify-end items-start text-gray-500">
        <button aria-label="最小化" className="w-[70px] h-4 flex justify-center items-center">
          <Minus className="size-3" strokeWidth={1.5} />
        </button>
        <button aria-label="最大化" className="-mr-2 w-3 h-4 flex items-center">
          <Square className="size-3 shrink-0" strokeWidth={1.5} />
        </button>
      </div>
      <header className="h-[55px] shrink-0 border-t-3 border-[#4f7f7f] border-b-3 border-b-[#b8f0ee] bg-[#9bdcdc] flex whitespace-nowrap">
        <svg viewBox="0 0 160 50" className="w-[160px] h-[49px] shrink-0">
          <path d="M4 12h16l-1 3zM0 18h18l-1 3zM4 24h14l-1 3zM0 30h18l-1 3z" fill="#e01818" stroke="#e01818" />
          <text x="17" y="35" fontFamily="Liberation Sans" fontWeight="bold" fontStyle="italic" fontSize="32" fill="#14148c">
            Frontline
          </text>
          <circle cx="61" cy="26" r="8" fill="#c8eeee" stroke="#14148c" strokeWidth="3" />
          <path d="M61 22l4 4-4 4-4-4z" fill="#e01818" />
        </svg>
        <div className="ml-1 text-center font-[Liberation_Serif,serif] font-bold">
          <p className="text-2xl leading-[28px]">Genesis 2000</p>
          <p className="text-sm leading-[22px] italic">Graphic Editor</p>
        </div>
        <p className="ml-[7px] pt-0.5 font-[Liberation_Mono,monospace] italic font-bold text-sm leading-4 whitespace-pre">
          {"28 M\n  09"}
        </p>
      </header>
      <div className="flex-1 min-h-0 flex justify-end">
        <div className="w-[93px] shrink-0 border-l-2 border-[#4a8a80] flex flex-col justify-between overflow-hidden">
          <div className="pt-[3px] pl-px flex gap-0.5 border-t border-[#86cfca]">
            <button aria-label="置前" className={btn}>
              <svg viewBox="0 0 30 28" className="size-full border border-[#123]">
                <path d="M8 10h14v13H8z" fill="none" stroke="#000" strokeWidth="2.4" />
                <path d="M15 2l5 6h-3v7h-4V8h-3z" fill="#000" />
              </svg>
            </button>
            <button aria-label="置后" className={btn}>
              <svg viewBox="0 0 30 28" className="size-full border border-[#123]">
                <path d="M8 5h14v14H8z" fill="none" stroke="#000" strokeWidth="2.4" />
                <path d="M11 15h8v5h2l-6 6-6-6h2z" fill="#000" />
              </svg>
            </button>
            <button aria-label="更多" className={btn} />
          </div>
          <p className="mb-0.5 pl-0.5 h-[44px] pt-[5px] border-t-2 border-b-2 border-[#a8ece0] bg-[#50d0b0] font-[Liberation_Mono,monospace] font-bold text-[15px] leading-[15px] whitespace-pre">
            {"X = 13.770\nY = 9.2896"}
          </p>
        </div>
      </div>
      <div className="h-[34px] shrink-0 flex border-b-2 border-black">
        <div className="flex-1 bg-[#ffffcf]" />
        <div className="w-2.5 bg-[#50d0b0] border-l-2 border-black" />
      </div>
      <div className="h-[26px] shrink-0 bg-[#b0fbfb] border-t-3 border-b-2 border-t-[#558888] border-b-[#336666]" />
      <div className="h-[5px] shrink-0 bg-[#b0fbfb] border-b-2 border-black" />
      <div className="h-[7px] shrink-0 bg-[#03566e]" />
    </section>
  );
}

/* ---------- Total Commander ---------- */

const TC_BAR = [
  ["refresh"],
  ["brief", "full", "thumbs", "tree"],
  ["branch"],
  ["star"],
  ["back", "next"],
  ["pack", "unpack"],
  ["FTP", "URL"],
  ["find", "rename", "sync", "paste"],
  ["note", "red", "logo"],
];

function ToolIcon({ name }: { name: string }) {
  if (name === "find") return <Binoculars className="size-[18px]" fill="#444" color="#333" />;
  if (name === "logo") return <FLogo className="size-[18px]" />;
  if (name === "FTP" || name === "URL")
    return (
      <span className={`flex flex-col items-center text-[8px] leading-[8px] font-bold ${name === "FTP" ? "text-[#a02040]" : "text-[#20409c]"}`}>
        {name}
        <BarIcon name="net" className="size-4" />
      </span>
    );
  return <BarIcon name={name} className="size-[18px]" />;
}

function Drives({ count = 10 }: { count?: number }) {
  const drives = ["c", "d", "e", "f", "g", "0", "1", "2", "3", "\\"];
  return (
    <div className="flex gap-0.5 text-base leading-6">
      {drives.slice(0, count).map((d, i) => (
        <button
          key={d}
          className={`w-9 h-[23px] shrink-0 flex items-center justify-center gap-1 border ${
            d === "e" ? "bg-[#cce8ff] border-[#99d1ff]" : "border-transparent"
          }`}
        >
          {i < 5 && <Drive win={i === 0} className="size-4 shrink-0" />}
          {i >= 5 && i < 9 && <GlobeFolder />}
          {i === 9 && (
            <svg viewBox="0 0 16 16" className="size-4">
              <path d="M6 1h9v10H6z" fill="#4aa0e0" stroke="#1c5c9c" />
              <path d="M1 7l8-2v8l-8 2z" fill="#6cc4f0" stroke="#1c5c9c" />
            </svg>
          )}
          {d}
        </button>
      ))}
    </div>
  );
}

function PanelHead({ side, info }: { side: string; info: string }) {
  return (
    <div className="h-[31px] shrink-0 flex items-center whitespace-nowrap overflow-hidden">
      <label className="relative shrink-0 w-[55px] h-[27px] bg-white border border-[#7a7a7a] flex items-center">
        <Drive className="size-4 ml-0.5" />
        <select aria-label={`${side}驱动器`} defaultValue="e" className="appearance-none flex-1 pl-1 bg-transparent text-[15px] leading-6">
          <option>e</option>
        </select>
        <ChevronDown className="size-3 mr-0.5 text-gray-600" />
      </label>
      <span className="ml-1">
        <Mixed text={info} />
      </span>
      {side === "左" && (
        <span className="ml-auto w-[42px] h-6 pl-2 flex gap-3 border-l border-gray-400">
          <button>\</button>
          <button>..</button>
        </span>
      )}
    </div>
  );
}

function FilePanelLeft() {
  return (
    <div className="w-[523px] shrink-0 flex flex-col">
      <PanelHead side="左" info={"[ 无 ]\u00a0\u00a0615,259,136 KB 可用，共 650,117,116 KB"} />
      <div className="h-[22px] mt-px shrink-0 flex items-center">
        <div className="w-[482px] h-[22px] bg-[#99b4d1] flex items-center pl-[3px] gap-0.5 leading-5">
          <span className="border-x-6 border-t-7 border-x-transparent border-t-black" />
          e:\input\*.*
        </div>
        <span className="ml-2 text-lg leading-4 pt-1">*</span>
        <span className="ml-[9px] border-x-5 border-t-6 border-x-transparent border-t-black" />
      </div>
      <div className="flex-1 min-h-0 bg-white border border-[#a0a0a0] overflow-hidden">
        <table className="table-fixed border-separate border-spacing-0 w-[521px]">
          <thead>
            <tr className="h-6 text-left whitespace-nowrap">
              <th className="w-[308px] p-0 font-normal bg-[#bcdcf4] border-b border-[#a0a0a0]">
                <span className="flex items-center gap-0.5">
                  <svg viewBox="0 0 12 14" className="w-3 h-[14px]">
                    <path d="M5 1h2v7h4l-5 5-5-5h4z" />
                  </svg>
                  <Mixed text="文件名" />
                </span>
              </th>
              <th className="w-[59px] p-0 pl-0.5 font-normal border-b border-r border-[#a0a0a0] border-r-[#e0e0e0]">
                <Mixed text="扩展名" />
              </th>
              <th className="w-[65px] p-0 pl-[3px] font-normal border-b border-r border-[#a0a0a0] border-r-[#e0e0e0]">
                <Mixed text="大小" />
              </th>
              <th className="p-0 pl-1 font-normal border-b border-[#a0a0a0]">
                <Mixed text="日期" />
              </th>
            </tr>
          </thead>
          <tbody>
            {FILES.map(([kind, name, ext, size, date]) => {
              const on = name.includes("BGA");
              const cell = `p-0 whitespace-nowrap ${on ? "bg-[#cce8ff] text-[#e0102c] border-y border-[#99d1ff]" : ""}`;
              return (
                <tr key={name} className="h-[21px]">
                  <td className={cell}>
                    <span className="flex items-center gap-0.5 pl-px">
                      <FileIcon kind={kind} />
                      <span>
                        <Mixed text={name} />
                      </span>
                    </span>
                  </td>
                  <td className={cell}>{ext}</td>
                  <td className={`${cell} text-right pr-1.5`}>
                    <span className={size === "<DIR>" ? "mr-3" : ""}>{size}</span>
                  </td>
                  <td className={`${cell} pl-px overflow-hidden`}>{date}</td>
                </tr>
              );
            })}
          </tbody>
        </table>
      </div>
      <div className="h-[25px] shrink-0 border border-t-0 border-[#a0a0a0] pl-px leading-6">
        <Mixed text="已选择 295 KB / 7,552 KB，1 / 15 个文件" />
      </div>
    </div>
  );
}

function FilePanelRight() {
  return (
    <div className="flex-1 min-w-0 flex flex-col overflow-hidden">
      <PanelHead side="右" info="[ 无 ]" />
      <div className="h-[22px] mt-px shrink-0 bg-[#bfcddb] flex items-center pl-[3px] gap-0.5 leading-5 whitespace-nowrap">
        <span className="border-x-6 border-t-7 border-x-transparent border-t-black" />
        e:\input\*.*
      </div>
      <div className="flex-1 min-h-0 bg-white border border-r-0 border-[#a0a0a0] overflow-hidden whitespace-nowrap">
        <div className="h-6 flex items-center gap-0.5 bg-[#bcdcf4] border-b border-[#a0a0a0]">
          <svg viewBox="0 0 12 14" className="w-3 h-[14px]">
            <path d="M5 13h2V6h4L6 1 1 6h4z" />
          </svg>
          <Mixed text="文件名" />
        </div>
        <ul>
          {RIGHT_FILES.map(([kind, name], i) => (
            <li key={i} className="h-[21px] pl-px flex items-center gap-0.5">
              <FileIcon kind={kind} />
              {name}
            </li>
          ))}
        </ul>
      </div>
      <div className="h-[25px] shrink-0 border border-t-0 border-[#a0a0a0] pl-px leading-6 whitespace-nowrap">
        <Mixed text="已选择 0 KB" />
      </div>
    </div>
  );
}

function TotalCommander() {
  const side = [
    ["look", "mt-0"],
    ["edit", "mt-3"],
    ["copy", "mt-3"],
    ["move", "mt-3"],
    ["folder", "mt-3"],
    ["pack", "mt-11"],
    ["newfolder", "mt-3"],
  ];
  return (
    <section className="absolute left-[1205px] right-0 top-[118px] h-[793px] flex flex-col overflow-hidden bg-[#f0f0f0] border border-r-0 border-[#555] shadow-[0_4px_16px_rgba(0,0,0,0.45)] font-[Open_Sans,Noto_Sans_CJK_SC,sans-serif] text-sm leading-5 text-black">
      <div className="bg-white shrink-0">
        <div className="h-7 pt-0.5 pl-2 flex items-center gap-1.5 text-[13px]">
          <Disk className="w-[15px] h-4" />
          Administrator^ - Total Commander (x64) 9.20 - WwW.DaYanZai.Me
        </div>
        <nav className="h-[22px] pl-[7px] flex items-center gap-[14px] text-xs whitespace-nowrap">
          {["文件(F)", "标记(M)", "命令(C)", "网络(N)", "显示(W)", "配置(O)", "开始(S)"].map((m) => (
            <button key={m}>{m}</button>
          ))}
        </nav>
        <div className="h-[33px] border-y border-[#a0a0a0] flex items-center overflow-hidden">
          {TC_BAR.map((group, g) => (
            <div key={g} className={`flex items-center shrink-0 ${g ? "border-l border-[#a0a0a0] px-1" : "pr-1"}`}>
              {group.map((name) => (
                <button
                  key={name}
                  aria-label={name}
                  className={`w-[29px] h-7 flex items-center justify-center ${name === "full" ? "bg-[#cce8ff]" : ""}`}
                >
                  <ToolIcon name={name} />
                </button>
              ))}
            </div>
          ))}
        </div>
        <div className="h-[30px] flex items-center whitespace-nowrap overflow-hidden">
          <span className="pl-1 w-[58px] shrink-0">FTP</span>
          <label htmlFor="mode" className="text-base shrink-0">传输模式</label>
          <div className="relative ml-1 w-[177px] h-[27px] shrink-0 border border-[#adadad] bg-[#e1e1e1] flex items-center pr-1">
            <select id="mode" className="appearance-none w-0 flex-1 pl-1 bg-transparent text-base leading-6 overflow-hidden">
              <option>二进制(压缩包、文档等)</option>
            </select>
            <ChevronDown className="size-[14px] shrink-0 text-gray-600" />
          </div>
          <button className="ml-1 w-[35px] h-[26px] shrink-0 border border-[#adadad] bg-[#e1e1e1] text-base leading-6">断开</button>
          <div className="ml-1 flex-1 min-w-0 h-[29px] pl-[3px] border border-r-0 border-[#7a7a7a] font-[Roboto,Noto_Sans_CJK_SC,sans-serif] text-[11px] leading-[13px] overflow-hidden">
            3:226 Transfer complete. 20,801,248 bytes (20,807,883 compr
            <br />
            3:Copied (2023/03/28 9:27:35): ftp://59.51.60.5/衡阳P3/Pre/
          </div>
        </div>
        <div className="h-[29px] border-b border-[#a0a0a0] flex items-center overflow-hidden">
          <div className="w-[560px] shrink-0">
            <Drives />
          </div>
          <Drives count={3} />
        </div>
      </div>
      <div className="flex-1 min-h-0 flex pl-px">
        <FilePanelLeft />
        <div className="w-[37px] shrink-0 pt-[70px] flex flex-col items-center">
          {side.map(([name, mt]) => (
            <button key={name} aria-label={name} className={mt}>
              <BarIcon name={name} className="size-5" />
            </button>
          ))}
        </div>
        <FilePanelRight />
      </div>
      <form className="h-[34px] shrink-0 flex items-center" onSubmit={(e) => e.preventDefault()}>
        <label htmlFor="cmd" className="w-[363px] pr-1 text-right shrink-0">
          e:\input&gt;
        </label>
        <input id="cmd" className="flex-1 min-w-0 h-7 bg-white border border-r-0 border-[#7a7a7a]" />
      </form>
      <div className="h-[28px] shrink-0 flex items-center overflow-hidden">
        {["F3 查看", "F4 编辑", "F5 复制", "F6 移动"].map((k) => (
          <button key={k} className="w-[154px] h-6 shrink-0 border-r border-[#a0a0a0] leading-6">
            <Mixed text={k} />
          </button>
        ))}
      </div>
    </section>
  );
}

/* ---------- taskbar ---------- */

function TaskIcon({ name }: { name: string }) {
  const cls = "w-[22px] h-[22px] shrink-0";
  if (name === "x") return <XWin className={cls} />;
  if (name === "disk") return <Disk className={cls} />;
  if (name === "f") return <FLogo className={cls} />;
  return (
    <svg viewBox="0 0 22 22" className={cls}>
      {name === "shell" && (
        <>
          <path d="M11 20L1 12C0 6 5 1 11 1s11 5 10 11z" fill="#f0b860" stroke="#a86a20" />
          <path d="M11 19L4 5M11 19L8 2M11 19l3-17M11 19l6-14" stroke="#fff0c8" />
          <path d="M15 8l2 4h4l-3 3 2 5-5-3-5 3 2-5-3-3h4z" fill="#f07820" stroke="#a04010" strokeWidth="0.6" />
        </>
      )}
      {name === "note" && (
        <>
          <path d="M3 1h17v20H3z" fill="#eef8fc" stroke="#88b8cc" />
          <path d="M5 5h13M5 9h13M5 13h13M5 17h13" stroke="#48a8d8" strokeWidth="2.2" />
        </>
      )}
      {name === "excel" && (
        <>
          <path d="M6 1h15v20H6z" fill="#e8f4e0" stroke="#4a9030" />
          <path d="M10 9h10M10 13h10M10 17h10M15 6v14" stroke="#58a83c" strokeWidth="1.3" />
          <path d="M0 3l13-1v13L0 17z" fill="#b8dca0" stroke="#3c8028" />
          <path d="M3 6l6 7M9 5l-6 9" stroke="#1c6010" strokeWidth="2.2" />
        </>
      )}
      {name === "genesis" && (
        <>
          <path d="M1 3l7-1-1 5-5 1z" fill="#28c8c8" />
          <ellipse cx="13" cy="13" rx="9" ry="7" fill="#1c7888" />
          <ellipse cx="13" cy="12" rx="6" ry="4" fill="#30c8a8" />
          <ellipse cx="14" cy="11" rx="3" ry="2" fill="#e8e050" />
          <path d="M2 8l3 8" stroke="#ccc" />
        </>
      )}
    </svg>
  );
}

function SogouMark({ className }: { className?: string }) {
  return (
    <svg viewBox="0 0 28 28" className={className}>
      <path d="M1 5L23 1l4 22-21 4z" fill="#ee5a28" />
      <path d="M20 7c-4-2-12-2-11 2s11 2 11 7-9 5-13 3" fill="none" stroke="#fff" strokeWidth="3.6" />
    </svg>
  );
}

const TASKS = [
  ["shell", "兴森快捷衡阳分公..."],
  ["note", "制作规范 (Ver:1.0.6)"],
  ["disk", "Administrator^ - ..."],
  ["f", "EDS工程系统"],
  ["excel", "Microsoft Excel - ..."],
  ["genesis", "Genesis"],
  ["x", "Engineering Tool..."],
  ["x", "Progress"],
  ["x", "Graphic Editor 9...."],
];

function Taskbar() {
  return (
    <footer className="h-10 shrink-0 flex bg-gradient-to-r from-[#363c40] via-[#343b3f] to-[#15262c] text-white font-[Open_Sans,Noto_Sans_CJK_SC,sans-serif] text-xs leading-4 whitespace-nowrap overflow-hidden">
      <button aria-label="开始" className="w-[34px] flex items-center justify-center">
        <FaWindows className="size-[17px]" />
      </button>
      <button aria-label="资源管理器" className="w-[63px] flex items-center justify-center pl-1">
        <svg viewBox="0 0 22 20" className="w-[22px] h-5">
          <path d="M0 1h8l2 2h12v16H0z" fill="#f8c850" />
          <path d="M0 1h8l2 3H0z" fill="#d89c20" />
          <path d="M4 19v-8h14v8h-4v-4H8v4z" fill="#3c8cd0" />
        </svg>
      </button>
      <div className="flex gap-[9px]">
        {TASKS.map(([icon, label], i) => (
          <button
            key={label}
            className={`pt-0.5 flex items-center gap-1.5 border-b-2 border-[#76b9ed] ${
              i === 2 ? "w-[160px] -mx-1 pl-[10px] bg-[#5d6266]" : "w-[152px] pl-1.5"
            }`}
          >
            <TaskIcon name={icon} />
            <span>{label}</span>
          </button>
        ))}
      </div>
      <div className="ml-auto flex items-center">
        <div className="flex items-center gap-2 mr-[14px]">
          <ChevronUp className="size-4" />
          <svg viewBox="0 0 16 16" className="size-4">
            <path d="M9 1L0 14l8-3z" fill="#e81818" />
            <path d="M9 1l6 13-5-3z" fill="#18b830" />
          </svg>
          <svg viewBox="0 0 14 16" className="w-[14px] h-4">
            <rect width="14" height="16" rx="2" fill="#1c88e8" />
            <path d="M4 3l7 6-4 5-1-5z" fill="#fff" />
          </svg>
          <Volume2 className="size-4" />
          <svg viewBox="0 0 16 16" className="size-4">
            <circle cx="8" cy="8" r="7.5" fill="#f0d020" stroke="#4a9818" />
            <path d="M8 4v8M4 8h8" stroke="#287818" strokeWidth="2.4" />
          </svg>
          <span className="text-sm">中</span>
          <SogouMark className="size-4 ml-2" />
        </div>
        <p className="w-[59px] pt-px">
          <span className="pl-1">9:52 周二</span>
          <br />
          2023/3/28
        </p>
      </div>
    </footer>
  );
}

export default function App() {
  return (
    <div className="h-screen flex flex-col overflow-hidden bg-[#03566e]">
      <main className="relative flex-1 min-h-0 overflow-hidden">
        <GenesisWindow />
        <EdsWindow />
        <TotalCommander />
        {/* edge of the docked side widget */}
        <span className="absolute left-0 bottom-2 w-1 h-16 rounded-r-sm bg-gradient-to-b from-[#3c4a50] to-[#4ce070]" />
        {/* input method bar */}
        <div className="absolute right-0 bottom-0 h-[30px] w-[117px] flex items-center overflow-hidden text-[#1468c8]">
          <SogouMark className="w-8 h-[30px] shrink-0" />
          <div className="h-6 flex-1 pl-1.5 flex items-center gap-[9px] bg-white font-[Noto_Sans_CJK_SC,sans-serif] text-base leading-6 font-bold">
            <span className="shrink-0">中</span>
            <svg viewBox="0 0 12 12" className="w-3 h-3 shrink-0">
              <circle cx="3" cy="3" r="2" fill="none" stroke="#1468c8" strokeWidth="1.4" />
              <path d="M8 6h3v3l-2 3H8l1-3H8z" fill="#1468c8" />
            </svg>
            <Mic className="size-[17px] shrink-0" fill="#1468c8" />
            <FaTable className="size-4 shrink-0" />
          </div>
        </div>
      </main>
      <Taskbar />
    </div>
  );
}
